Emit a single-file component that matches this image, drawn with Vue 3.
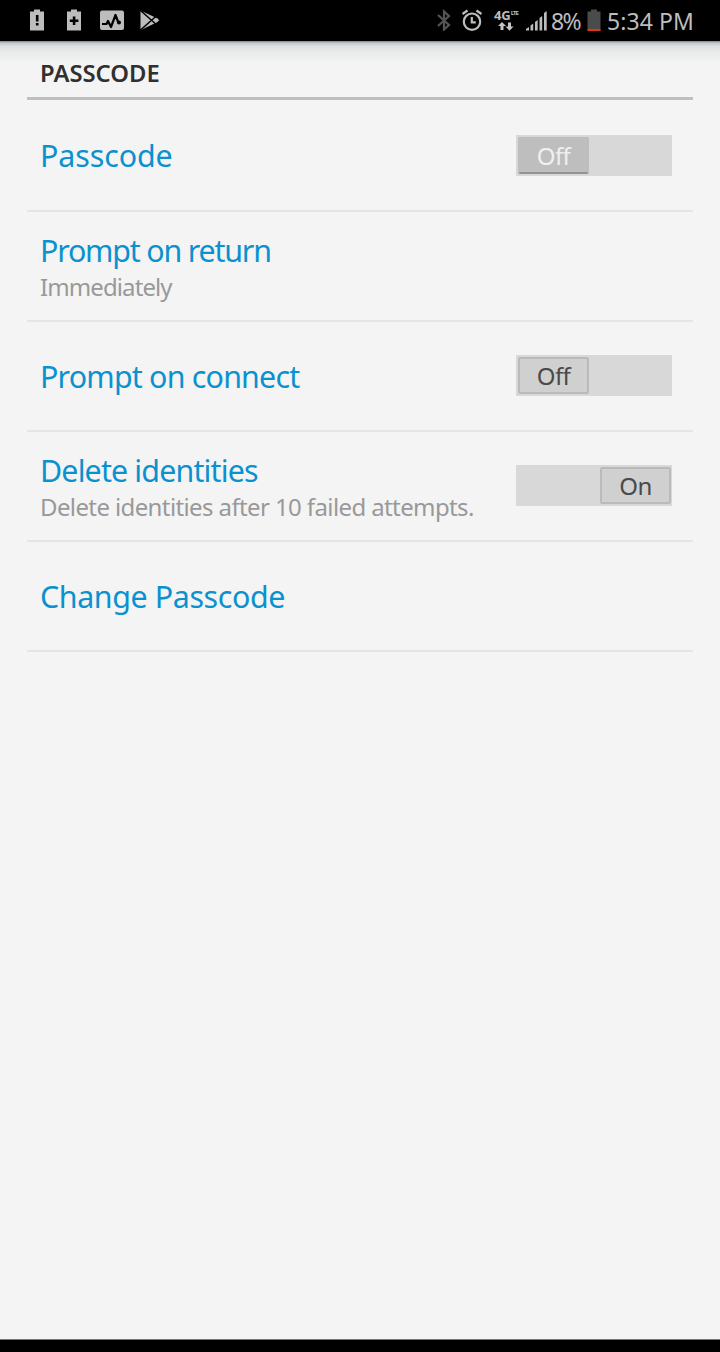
<template>
    <div class="screen">
        <header class="status-bar">
            <div class="notifications">
                <svg width="16" height="22" viewBox="0 0 16 22">
                    <path fill="#bdbdbd" d="M1 2.5h4V0.5h6v2h4v19H1z" />
                    <path fill="#000" d="M6.9 6h2.6v6.5H6.9zM6.9 14h2.6v2.6H6.9z" />
                </svg>
                <svg width="16" height="22" viewBox="0 0 16 22">
                    <path fill="#bdbdbd" d="M1 2.5h4V0.5h6v2h4v19H1z" />
                    <path fill="#000" d="M6.8 7.5h2.6v3h3v2.6h-3v3H6.8v-3h-3v-2.6h3z" />
                </svg>
                <svg class="activity" width="24" height="22" viewBox="0 0 24 22">
                    <rect y="1.5" width="24" height="19.5" rx="2" fill="#bdbdbd" />
                    <path
                        fill="none"
                        stroke="#000"
                        stroke-width="2.2"
                        stroke-linejoin="round"
                        d="M2 15h4.5l1.5-3 3 6 4.500-12 3 8"
                    />
                    <circle cx="19" cy="13.5" r="2" fill="#000" />
                </svg>
                <svg class="play" width="20" height="22" viewBox="0 0 20 22">
                    <path fill="#bdbdbd" d="M0.5 1.5L17 9.3l2.3 2L17 13.3 0.5 21.2z" />
                    <path fill="none" stroke="#000" stroke-width="1.5" d="M0 1L15.5 14.8M0 21.5L15.5 7.8" />
                </svg>
            </div>
            <div class="system">
                <svg class="bluetooth" width="14" height="22" viewBox="0 0 14 22">
                    <path fill="none" stroke="#555" stroke-width="2.2" d="M1 6l11 10-5 4.5v-18L12 7 1 17" />
                </svg>
                <svg class="alarm" width="22" height="22" viewBox="0 0 22 22">
                    <g fill="none" stroke="#bdbdbd" stroke-width="2.2">
                        <circle cx="11" cy="12.7" r="8.2" />
                        <path d="M10.8 8v5.3h4M1.5 5l5-3.5M20.5 5l-5-3.5" />
                    </g>
                </svg>
                <div class="network">
                    <div class="network-name">4G<small>LTE</small></div>
                    <svg width="16" height="9" viewBox="0 0 16 9">
                        <path fill="#c6c6c6" d="M4 0l4 4H5.5v4h-3V4H0zM10 0.5h3v4h2.5l-4 4.2-4-4.2H10z" />
                    </svg>
                </div>
                <svg class="signal" width="21" height="22" viewBox="0 0 21 22">
                    <path fill="#bdbdbd" d="M0 21.5v-1.5l3-2v3.5zM4.5 21.5v-5l2.7-2v7zM9 21.5v-8.5l2.7-2v10.5zM13.5 21.5V9l2.7-2v14.5zM18 21.5V4L20.7 2v19.5z" />
                </svg>
                <span class="percent">8%</span>
                <svg class="battery" width="14" height="22" viewBox="0 0 14 22">
                    <path fill="#4b4b4b" d="M0.5 2.5h3.5V0.5h6v2h3.5v19h-13z" />
                    <path fill="#e63312" d="M0.5 20h13v2h-13z" />
                </svg>
                <span class="clock">5:34 PM</span>
            </div>
        </header>

        <main class="content">
            <h1>PASSCODE</h1>
            <ul>
                <li v-for="item in settings" :key="item.title">
                    <div class="labels">
                        <span class="title" :style="{ letterSpacing: item.tracking + 'px' }">{{ item.title }}</span>
                        <span
                            v-if="item.summary"
                            class="summary"
                            :style="{ letterSpacing: item.summaryTracking + 'px' }"
                        >{{ item.summary }}</span>
                    </div>
                    <button
                        v-if="item.toggle"
                        class="switch"
                        :class="{ on: item.on }"
                        :disabled="item.disabled"
                        @click="item.on = !item.on"
                    >
                        <span class="thumb">{{ item.on ? 'On' : 'Off' }}</span>
                    </button>
                </li>
            </ul>
        </main>

        <footer class="nav-edge"></footer>
    </div>
</template>

<script setup>
import { ref } from 'vue'

const settings = ref([
    { title: 'Passcode', tracking: -0.1, toggle: true, on: false, disabled: true },
    {
        title: 'Prompt on return',
        tracking: -1.2,
        summary: 'Immediately',
        summaryTracking: -0.9
    },
    { title: 'Prompt on connect', tracking: -0.8, toggle: true, on: false },
    {
        title: 'Delete identities',
        tracking: -0.85,
        summary: 'Delete identities after 10 failed attempts.',
        summaryTracking: -0.61,
        toggle: true,
        on: true
    },
    { title: 'Change Passcode', tracking: -0.4 }
])
</script>

<style>
body {
    margin: 0;
    background-color: #f4f4f4;
}
</style>

<style scoped>
.screen {
    display: flex;
    flex-direction: column;
    width: 720px;
    height: 1352px;
    background-color: #f4f4f4;
    font-family: "Noto Sans", sans-serif;
}

.status-bar {
    display: flex;
    justify-content: space-between;
    height: 41px;
    box-sizing: border-box;
    padding: 9px 26px 0 29px;
    background-color: #000;
    color: #bdbdbd;
}

.notifications,
.system {
    display: flex;
    align-items: flex-start;
}

.notifications {
    gap: 21px;
}

.notifications .activity {
    margin-left: -3px;
}

.notifications .play {
    margin-left: -5px;
}

.alarm {
    margin-left: 10px;
}

.network {
    display: flex;
    flex-direction: column;
    align-items: center;
    width: 26px;
    margin-left: 10px;
}

.network-name {
    display: flex;
    height: 13px;
    font-size: 13px;
    font-weight: bold;
    line-height: 12px;
}

.network-name small {
    font-size: 6px;
    line-height: 8px;
    letter-spacing: -1px;
}

.signal {
    margin-left: 7px;
}

.percent,
.clock {
    font-size: 23px;
    line-height: 24px;
    white-space: nowrap;
}

.percent {
    width: 30px;
    margin-left: 4px;
    letter-spacing: -1.5px;
}

.battery {
    margin-left: 6px;
}

.clock {
    margin-left: 6px;
    letter-spacing: 0.1px;
}

.content {
    flex: 1;
    padding: 0 27px;
    background: linear-gradient(#7f8388 0, #c4c8cc 2px, #dcdee0 5px, #e8e9e9 10px, #f4f4f4 22px);
}

h1 {
    height: 56px;
    margin: 0;
    padding-left: 13px;
    border-bottom: 3px solid #bfbfbf;
    color: #303030;
    font-size: 23.8px;
    font-weight: 600;
    line-height: 65px;
}

ul {
    margin: 0;
    padding: 0;
    list-style: none;
}

li {
    display: flex;
    align-items: center;
    justify-content: space-between;
    height: 110px;
    box-sizing: border-box;
    padding: 2px 21px 0 13px;
    border-bottom: 2px solid #e5e5e5;
}

li:first-child {
    height: 112px;
}

.labels {
    display: flex;
    flex-direction: column;
}

.title {
    color: #0a91cf;
    font-size: 30.4px;
    line-height: 40px;
}

.summary {
    color: #999;
    font-size: 24px;
    line-height: 32px;
}

.switch {
    display: flex;
    width: 156px;
    height: 41px;
    margin-bottom: 3px;
    padding: 2px 1px 2px 2px;
    border: none;
    background-color: #d8d8d8;
    cursor: pointer;
}

li:first-child .switch {
    margin-bottom: 1px;
}

.switch.on {
    justify-content: flex-end;
}

.thumb {
    width: 71px;
    height: 37px;
    box-sizing: border-box;
    border: 2px solid #bababa;
    border-radius: 2px;
    background-color: #d0d0d0;
    color: #4a4a4a;
    font-family: "Noto Sans", sans-serif;
    font-size: 24px;
    letter-spacing: -0.6px;
    line-height: 33px;
    text-align: center;
}

.switch:disabled .thumb {
    border-color: #bebebe;
    border-bottom-color: #929292;
    background-color: #bebebe;
    color: #f0f0f0;
}

.nav-edge {
    height: 12px;
    border-top: 1px solid #777;
    background-color: #000;
}
</style>
